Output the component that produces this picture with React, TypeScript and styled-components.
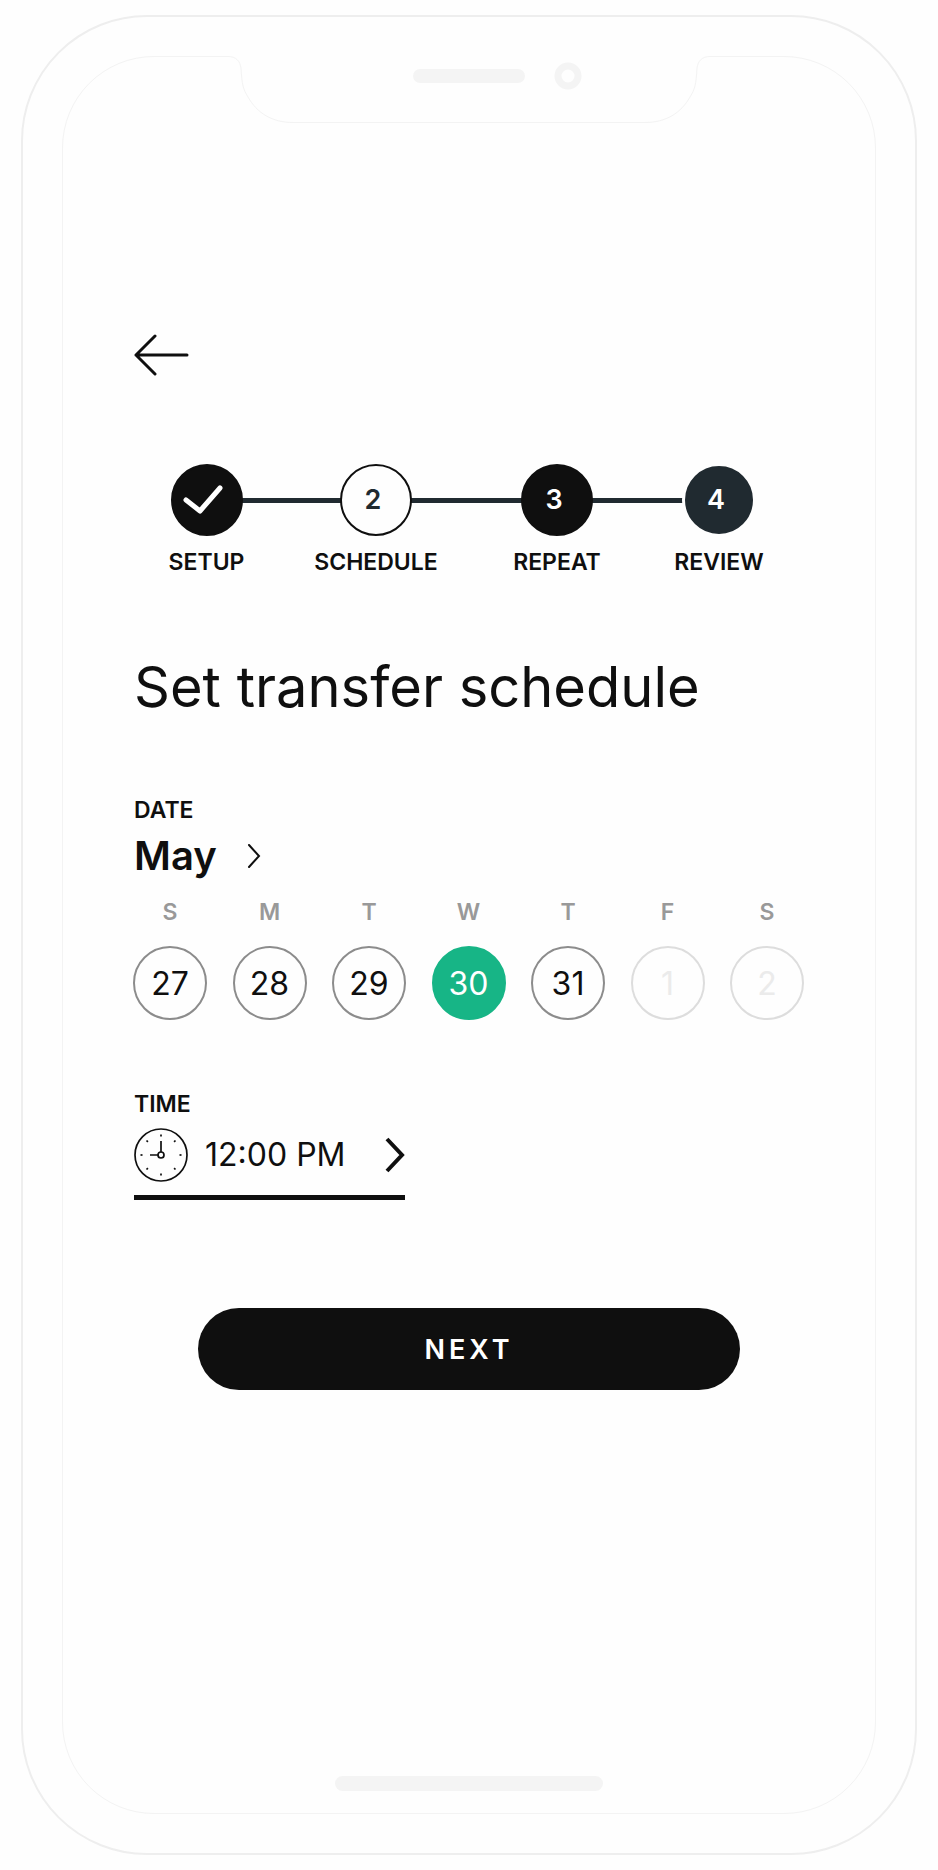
import React, { useState } from "react";
import styled, { createGlobalStyle } from "styled-components";

const ink = "#0f0f0f";
const slate = "#202a30";
const green = "#17b586";

const GlobalStyle = createGlobalStyle`
  *, *::before, *::after { box-sizing: border-box; }
  body {
    margin: 0;
    background: #fefefe;
    color: ${ink};
    font-family: Inter, "Open Sans", sans-serif;
  }
  button {
    margin: 0;
    padding: 0;
    border: 0;
    background: none;
    color: inherit;
    font: inherit;
    cursor: pointer;
  }
`;

const Page = styled.div`
  padding: 15px 21px 14px;
`;

const Phone = styled.div`
  padding: 39px;
  border: 2px solid #eeeeee;
  border-radius: 126px;
`;

const Screen = styled.div`
  position: relative;
  display: flex;
  flex-direction: column;
  padding: 277px 71px 22px;
  border: 1px solid #f3f3f3;
  border-radius: 92px;
`;

const Notch = styled.svg`
  position: absolute;
  top: -2px;
  left: 50%;
  margin-left: -241px;
  width: 482px;
  height: 72px;
`;

const BackButton = styled.button`
  align-self: flex-start;
  height: 42px;

  svg { display: block; }
`;

const Steps = styled.ol`
  position: relative;
  display: grid;
  grid-template-columns: minmax(0, 73fr) minmax(0, 122fr) minmax(0, 96fr) minmax(0, 84fr);
  column-gap: 72px;
  margin: 88px 43px 0 36px;
  padding: 0;
  list-style: none;

  &::before {
    content: "";
    position: absolute;
    top: 34px;
    left: 36px;
    right: 70px;
    height: 5px;
    background: ${slate};
  }
`;

const Step = styled.li`
  position: relative;
  display: flex;
  flex-direction: column;
  align-items: center;
`;

type StepKind = "done" | "current" | "next" | "last";

const StepMark = styled.span<{ $kind: StepKind }>`
  display: flex;
  align-items: center;
  justify-content: center;
  width: ${(p) => (p.$kind === "last" ? 68 : 72)}px;
  height: ${(p) => (p.$kind === "last" ? 68 : 72)}px;
  margin: ${(p) => (p.$kind === "last" ? 2 : 0)}px 0;
  padding-right: ${(p) => (p.$kind === "done" ? 8 : 6)}px;
  border: 2px solid ${(p) => (p.$kind === "last" ? slate : ink)};
  border-radius: 50%;
  background: ${(p) => ({ done: ink, current: "#fefefe", next: ink, last: slate })[p.$kind]};
  box-shadow: 0 0 0 ${(p) => (p.$kind === "last" ? 3 : 0)}px #fefefe;
  color: ${(p) => (p.$kind === "current" ? slate : "#ffffff")};
  font-size: 27px;
  font-weight: 600;
  line-height: 28px;
`;

const Label = styled.span`
  font-size: 23px;
  font-weight: 600;
  line-height: 28px;
  white-space: nowrap;
`;

const StepLabel = styled(Label)`
  margin-top: 12px;
`;

const Title = styled.h1`
  margin: 79px 0 77px;
  font-size: 56px;
  font-weight: 400;
  line-height: 64px;
`;

const MonthButton = styled.button`
  display: flex;
  align-items: center;
  align-self: flex-start;
  gap: 30px;
  margin-top: 8px;
  font-size: 40px;
  font-weight: 600;
  line-height: 48px;
`;

const Week = styled.div`
  display: flex;
  justify-content: space-between;
  margin: 18px 0 70px -1px;
`;

const DayColumn = styled.div`
  display: flex;
  flex-direction: column;
  align-items: center;
  gap: 20px;
`;

const Weekday = styled(Label)`
  color: #999999;
`;

const Day = styled.button<{ $selected: boolean }>`
  width: 74px;
  height: 74px;
  border: 2px solid ${(p) => (p.$selected ? green : "#8c8c8c")};
  border-radius: 50%;
  background: ${(p) => (p.$selected ? green : "transparent")};
  color: ${(p) => (p.$selected ? "#ffffff" : ink)};
  font-size: 32px;

  &:disabled {
    border-color: #dddddd;
    color: #ebebeb;
    cursor: default;
  }
`;

const TimeButton = styled.button`
  display: flex;
  align-items: center;
  align-self: flex-start;
  width: 271px;
  margin-top: 10px;
  padding-bottom: 13px;
  border-bottom: 5px solid ${ink};
  font-size: 32px;
  line-height: 48px;

  svg:last-child { margin-left: auto; }
`;

const TimeValue = styled.span`
  margin-left: 16px;
`;

const NextButton = styled.button`
  align-self: center;
  width: 81%;
  height: 82px;
  margin-top: 108px;
  border-radius: 41px;
  background: ${ink};
  color: #ffffff;
  font-size: 27px;
  font-weight: 600;
  letter-spacing: 4px;
`;

const HomeBar = styled.div`
  align-self: center;
  width: 40%;
  height: 15px;
  margin-top: 386px;
  border-radius: 8px;
  background: #f4f4f4;
`;

const steps: { label: string; kind: StepKind }[] = [
  { label: "SETUP", kind: "done" },
  { label: "SCHEDULE", kind: "current" },
  { label: "REPEAT", kind: "next" },
  { label: "REVIEW", kind: "last" },
];

const days = [
  { weekday: "S", date: 27 },
  { weekday: "M", date: 28 },
  { weekday: "T", date: 29 },
  { weekday: "W", date: 30 },
  { weekday: "T", date: 31 },
  { weekday: "F", date: 1, disabled: true },
  { weekday: "S", date: 2, disabled: true },
];

const PhoneNotch = () => (
  <Notch viewBox="0 0 482 72" fill="none" aria-hidden="true">
    <path d="M0 0H482V2H0Z" fill="#fefefe" />
    <path
      d="M0 1.500C8 1.500 12 6 13 13C14 30 15 34 20 42C29 58 44 67.500 65 67.500H417C438 67.500 453 58 462 42C467 34 468 30 469 13C470 6 474 1.500 482 1.500"
      fill="#fefefe"
      stroke="#f3f3f3"
    />
    <rect x="185" y="14" width="112" height="14" rx="7" fill="#f4f4f4" />
    <circle cx="340" cy="21" r="10" stroke="#f4f4f4" strokeWidth="7" />
  </Notch>
);

const ClockIcon = () => (
  <svg width="55" height="54" viewBox="0 0 55 54" fill="none" stroke={ink} strokeWidth="1.700" aria-hidden="true">
    <circle cx="27" cy="27" r="26" />
    <circle cx="27" cy="27" r="3" />
    <path d="M27 24V13M24 27H16" />
    {[0, 45, 90, 135, 180, 225, 270, 315].map((angle) => (
      <path key={angle} d="M27 6.500V8.500" transform={`rotate(${angle} 27 27)`} />
    ))}
  </svg>
);

export default function App() {
  const [selected, setSelected] = useState(30);

  return (
    <Page>
      <GlobalStyle />
      <Phone>
        <Screen as="main">
          <PhoneNotch />
          <BackButton type="button" aria-label="Back">
            <svg width="55" height="42" viewBox="0 0 55 42" fill="none" stroke={ink} strokeWidth="3" strokeLinecap="round" strokeLinejoin="round">
              <path d="M53 21H2M21 2L2 21L21 40" />
            </svg>
          </BackButton>

          <Steps>
            {steps.map((step, i) => (
              <Step key={step.label} aria-current={step.kind === "current" ? "step" : undefined}>
                <StepMark $kind={step.kind}>
                  {step.kind === "done" ? (
                    <svg width="40" height="30" viewBox="0 0 40 30" fill="none" stroke="#ffffff" strokeWidth="5" strokeLinecap="round" strokeLinejoin="round" aria-label="Done">
                      <path d="M3 15L17 26L37 3" />
                    </svg>
                  ) : (
                    i + 1
                  )}
                </StepMark>
                <StepLabel>{step.label}</StepLabel>
              </Step>
            ))}
          </Steps>

          <Title>Set transfer schedule</Title>

          <Label id="date-label">DATE</Label>
          <MonthButton type="button">
            May
            <svg width="14" height="24" viewBox="0 0 14 24" fill="none" stroke={ink} strokeWidth="2" strokeLinecap="round" aria-hidden="true">
              <path d="M2 1L12 12L2 23" />
            </svg>
          </MonthButton>
          <Week role="group" aria-labelledby="date-label">
            {days.map((day) => (
              <DayColumn key={day.date}>
                <Weekday>{day.weekday}</Weekday>
                <Day
                  type="button"
                  disabled={day.disabled}
                  $selected={selected === day.date}
                  aria-pressed={selected === day.date}
                  onClick={() => setSelected(day.date)}
                >
                  {day.date}
                </Day>
              </DayColumn>
            ))}
          </Week>

          <Label id="time-label">TIME</Label>
          <TimeButton type="button" aria-labelledby="time-label time-value">
            <ClockIcon />
            <TimeValue id="time-value">12:00 PM</TimeValue>
            <svg width="20" height="36" viewBox="0 0 20 36" fill="none" stroke={ink} strokeWidth="4" aria-hidden="true">
              <path d="M2 2L17 18L2 34" />
            </svg>
          </TimeButton>

          <NextButton type="button">NEXT</NextButton>
          <HomeBar />
        </Screen>
      </Phone>
    </Page>
  );
}
